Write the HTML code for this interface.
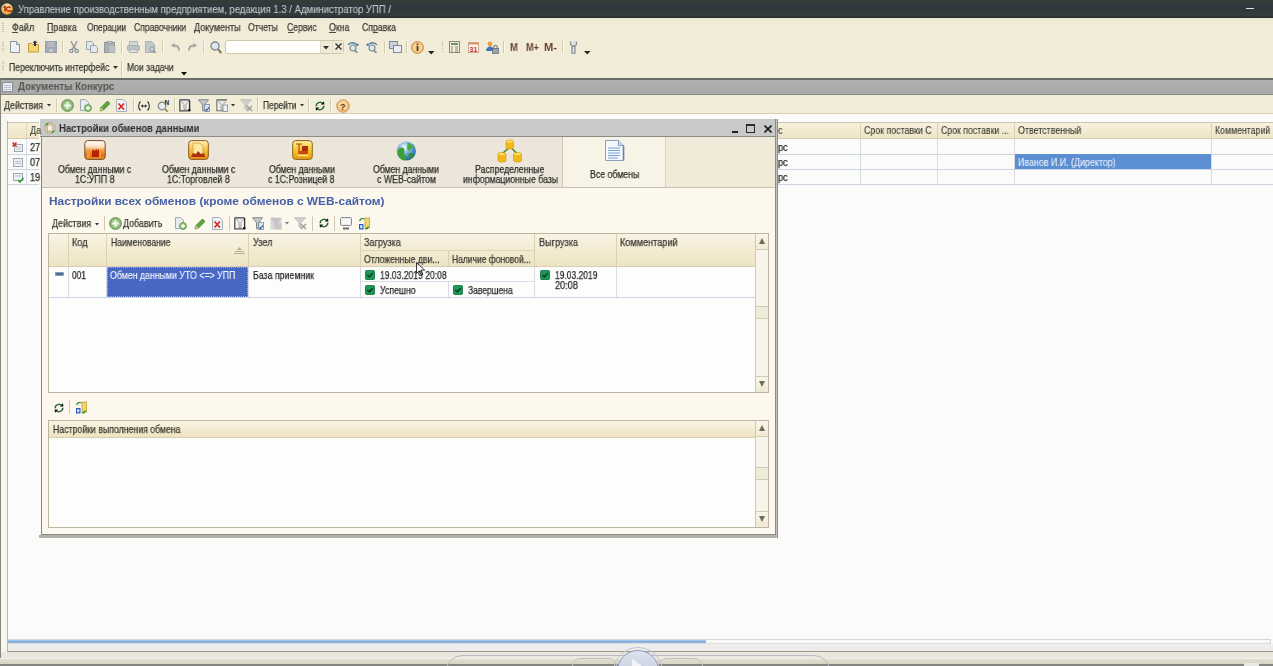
<!DOCTYPE html>
<html><head><meta charset="utf-8"><style>
html,body{margin:0;padding:0;}
body{width:1273px;height:666px;overflow:hidden;position:relative;background:#fbfbf9;font-family:"Liberation Sans", sans-serif;}
span{will-change:transform;}
</style></head><body>
<div style="position:absolute;left:0px;top:0px;width:1273px;height:18px;background:linear-gradient(#3b3a33 0px,#333b3d 2px,#2f373a 9px,#353d3c 15px,#262b2b 18px);"></div><svg style="position:absolute;left:1px;top:3px" width="12" height="12" viewBox="0 0 12 12"><defs><radialGradient id="lg" cx="0.45" cy="0.3" r="0.7"><stop offset="0" stop-color="#fbf4d0"/><stop offset="0.6" stop-color="#f4c060"/><stop offset="1" stop-color="#e89838"/></radialGradient></defs><circle cx="6" cy="6" r="5.8" fill="url(#lg)"/><path d="M2.5 4.5l1.5-1v5" stroke="#b02a10" stroke-width="1.5" fill="none"/><path d="M9.5 5a2.2 2 0 1 0-2 3h4" stroke="#c03010" stroke-width="1.4" fill="none"/></svg><div style="position:absolute;left:1246px;top:8px;width:8px;height:1px;background:#e0e2e3;"></div><div style="position:absolute;left:0px;top:18px;width:1273px;height:61px;background:linear-gradient(#e8e6d6 0px,#f1ebd7 3px,#f2edd8 61px);"></div><div style="position:absolute;left:2px;top:23px;width:2px;height:1px;background:#c8c2ae;"></div><div style="position:absolute;left:2px;top:25px;width:2px;height:1px;background:#c8c2ae;"></div><div style="position:absolute;left:2px;top:27px;width:2px;height:1px;background:#c8c2ae;"></div><div style="position:absolute;left:2px;top:29px;width:2px;height:1px;background:#c8c2ae;"></div><div style="position:absolute;left:2px;top:31px;width:2px;height:1px;background:#c8c2ae;"></div><div style="position:absolute;left:2px;top:42px;width:2px;height:1px;background:#c8c2ae;"></div><div style="position:absolute;left:2px;top:44px;width:2px;height:1px;background:#c8c2ae;"></div><div style="position:absolute;left:2px;top:46px;width:2px;height:1px;background:#c8c2ae;"></div><div style="position:absolute;left:2px;top:48px;width:2px;height:1px;background:#c8c2ae;"></div><div style="position:absolute;left:2px;top:50px;width:2px;height:1px;background:#c8c2ae;"></div><div style="position:absolute;left:2px;top:61px;width:2px;height:1px;background:#c8c2ae;"></div><div style="position:absolute;left:2px;top:63px;width:2px;height:1px;background:#c8c2ae;"></div><div style="position:absolute;left:2px;top:65px;width:2px;height:1px;background:#c8c2ae;"></div><div style="position:absolute;left:2px;top:67px;width:2px;height:1px;background:#c8c2ae;"></div><div style="position:absolute;left:2px;top:69px;width:2px;height:1px;background:#c8c2ae;"></div><div style="position:absolute;left:12px;top:32px;width:6px;height:1px;background:#4a4a40;"></div><div style="position:absolute;left:47px;top:32px;width:6px;height:1px;background:#4a4a40;"></div><div style="position:absolute;left:287.5px;top:32px;width:6px;height:1px;background:#4a4a40;"></div><div style="position:absolute;left:329px;top:32px;width:6.5px;height:1px;background:#4a4a40;"></div><div style="position:absolute;left:372.5px;top:32px;width:5px;height:1px;background:#4a4a40;"></div><svg style="position:absolute;left:10px;top:41px" width="10" height="12" viewBox="0 0 10 12"><path d="M0.5 0.5h6l3 3v8h-9z" fill="#eef3fa" stroke="#8d949a"/><path d="M6.5 0.5v3h3" fill="#d8dee6" stroke="#8d949a"/></svg><svg style="position:absolute;left:28px;top:40px" width="11" height="13" viewBox="0 0 11 13"><path d="M0.5 3.5h3l1 1h6v7.5h-10z" fill="#f3d676" stroke="#c59a3a"/><path d="M7 0.5l2.5 2.5h-1.5v3h-2v-3h-1.5z" fill="#333"/></svg><svg style="position:absolute;left:45px;top:41px" width="12" height="12" viewBox="0 0 12 12"><rect x="0.5" y="0.5" width="11" height="11" fill="#a0aab0" stroke="#98a2a8"/><rect x="2.5" y="1" width="7" height="5" fill="#b4bcc0"/><rect x="4" y="8" width="4" height="3" fill="#c4cacc"/></svg><div style="position:absolute;left:62px;top:40.5px;width:1px;height:12.5px;background:#d2cbb4;"></div><div style="position:absolute;left:63px;top:40.5px;width:1px;height:12.5px;background:#fbf8ee;"></div><svg style="position:absolute;left:69px;top:41px" width="10" height="12" viewBox="0 0 10 12"><path d="M2 0l3 6l3-6M5 6l-2.5 3M5 6l2.5 3" stroke="#8a949a" stroke-width="1.3" fill="none"/><circle cx="2.3" cy="10" r="1.7" fill="none" stroke="#8a949a" stroke-width="1.2"/><circle cx="7.7" cy="10" r="1.7" fill="none" stroke="#8a949a" stroke-width="1.2"/></svg><svg style="position:absolute;left:86px;top:41px" width="12" height="12" viewBox="0 0 12 12"><path d="M0.5 0.5h5l2 2v6h-7z" fill="#e4e8ec" stroke="#99a2a8"/><path d="M4.5 4.5h5l2 2v5h-7z" fill="#e4e8ec" stroke="#99a2a8"/></svg><svg style="position:absolute;left:104px;top:41px" width="12" height="12" viewBox="0 0 12 12"><rect x="0.5" y="1.5" width="10" height="10" fill="#a8b0b4" stroke="#8f989d"/><rect x="3" y="0.5" width="5" height="2" fill="#c0c6ca" stroke="#8f989d" stroke-width="0.8"/><rect x="5" y="5" width="6.5" height="6.5" fill="#b8c0c4"/></svg><div style="position:absolute;left:121px;top:40.5px;width:1px;height:12.5px;background:#d2cbb4;"></div><div style="position:absolute;left:122px;top:40.5px;width:1px;height:12.5px;background:#fbf8ee;"></div><svg style="position:absolute;left:127px;top:41px" width="13" height="12" viewBox="0 0 13 12"><rect x="2.5" y="0.5" width="8" height="4" fill="#d4d8d8" stroke="#b0b6b8"/><rect x="0.5" y="4.5" width="12" height="5" rx="1" fill="#bcc2c4" stroke="#aab0b2"/><rect x="2.5" y="8.5" width="8" height="3" fill="#dcdfe0" stroke="#b0b6b8"/></svg><svg style="position:absolute;left:145px;top:41px" width="12" height="12" viewBox="0 0 12 12"><path d="M0.5 0.5h6l3 3v8h-9z" fill="#c4cacc" stroke="#aab0b4"/><circle cx="7" cy="8" r="2.3" fill="#d0d6d8" stroke="#8e969a"/><path d="M8.5 9.5l2.5 2.5" stroke="#8e969a" stroke-width="1.4"/></svg><div style="position:absolute;left:162px;top:40.5px;width:1px;height:12.5px;background:#d2cbb4;"></div><div style="position:absolute;left:163px;top:40.5px;width:1px;height:12.5px;background:#fbf8ee;"></div><svg style="position:absolute;left:171px;top:43px" width="9" height="8" viewBox="0 0 9 8"><path d="M8 7.5c0-3-2-5-5-5" stroke="#a4a9a6" stroke-width="2" fill="none"/><path d="M0 2.5l3.5-2.5v5z" fill="#a4a9a6"/></svg><svg style="position:absolute;left:187.5px;top:43px" width="9" height="8" viewBox="0 0 9 8"><path d="M1 7.5c0-3 2-5 5-5" stroke="#a4a9a6" stroke-width="2" fill="none"/><path d="M9 2.5l-3.5-2.5v5z" fill="#a4a9a6"/></svg><div style="position:absolute;left:203px;top:40.5px;width:1px;height:12.5px;background:#d2cbb4;"></div><div style="position:absolute;left:204px;top:40.5px;width:1px;height:12.5px;background:#fbf8ee;"></div><svg style="position:absolute;left:209.5px;top:41px" width="12" height="13" viewBox="0 0 12 13"><circle cx="5" cy="5" r="4" fill="#dfe8f0" stroke="#7c8890" stroke-width="1.3"/><path d="M7.8 8l3.5 4" stroke="#8a7a5a" stroke-width="2"/></svg><div style="position:absolute;left:225px;top:39.5px;width:119px;height:14.5px;background:#fffefa;border:1px solid #cfc6ac;border-radius:3px;box-sizing:border-box;"></div><div style="position:absolute;left:320px;top:40.5px;width:12px;height:12.5px;background:#f0ead6;border-left:1px solid #e0d8c0;box-sizing:border-box;"></div><div style="position:absolute;left:332px;top:40.5px;width:11px;height:12.5px;background:#f0ead6;border-left:1px solid #e6dfc8;box-sizing:border-box;"></div><svg style="position:absolute;left:323px;top:45.5px" width="6" height="4" viewBox="0 0 6 4"><path d="M0 0h6l-3 3.5z" fill="#333"/></svg><svg style="position:absolute;left:334.5px;top:43px" width="7" height="7" viewBox="0 0 7 7"><path d="M0.5 0.5l6 6M6.5 0.5l-6 6" stroke="#333" stroke-width="1.4"/></svg><svg style="position:absolute;left:347px;top:41px" width="13" height="12" viewBox="0 0 13 12"><circle cx="6" cy="7" r="3" fill="#dfe8f0" stroke="#7c8890" stroke-width="1.2"/><path d="M8 9.5l2.5 2.5" stroke="#7c8890" stroke-width="1.6"/><path d="M1 4c2-3 7-3 9 0" stroke="#4a78a8" stroke-width="1.3" fill="none"/><path d="M12 4.5l-3 0.5l1.5-3z" fill="#4a78a8"/></svg><svg style="position:absolute;left:365px;top:41px" width="13" height="12" viewBox="0 0 13 12"><circle cx="7" cy="7" r="3" fill="#dfe8f0" stroke="#7c8890" stroke-width="1.2"/><path d="M9 9.5l2.5 2.5" stroke="#7c8890" stroke-width="1.6"/><path d="M3 4c2-3 7-3 9 0" stroke="#4a78a8" stroke-width="1.3" fill="none"/><path d="M1 4.5l3 0.5l-1.5-3z" fill="#4a78a8"/></svg><div style="position:absolute;left:383.5px;top:40.5px;width:1px;height:12.5px;background:#d2cbb4;"></div><div style="position:absolute;left:384.5px;top:40.5px;width:1px;height:12.5px;background:#fbf8ee;"></div><svg style="position:absolute;left:388.5px;top:41px" width="13" height="12" viewBox="0 0 13 12"><rect x="0.5" y="0.5" width="8" height="7" fill="#c8d4e0" stroke="#7c8c9c"/><rect x="4.5" y="4.5" width="8" height="7" fill="#e8eef4" stroke="#7c8c9c"/></svg><div style="position:absolute;left:405.5px;top:40.5px;width:1px;height:12.5px;background:#d2cbb4;"></div><div style="position:absolute;left:406.5px;top:40.5px;width:1px;height:12.5px;background:#fbf8ee;"></div><svg style="position:absolute;left:410.5px;top:40.5px" width="13" height="13" viewBox="0 0 13 13"><circle cx="6.5" cy="6.5" r="6" fill="#f0b872" stroke="#c8823a" stroke-width="0.8"/><circle cx="6.5" cy="6.5" r="4.5" fill="#f6d49a"/><rect x="5.6" y="5" width="1.8" height="5" fill="#5a3a10"/><rect x="5.6" y="2.6" width="1.8" height="1.6" fill="#5a3a10"/></svg><svg style="position:absolute;left:428px;top:50.5px" width="7" height="4" viewBox="0 0 7 4"><path d="M0 0h6.5l-3.25 3.5z" fill="#222"/></svg><div style="position:absolute;left:442px;top:41.0px;width:1px;height:1.2px;background:#c4bea8;"></div><div style="position:absolute;left:442px;top:43.4px;width:1px;height:1.2px;background:#c4bea8;"></div><div style="position:absolute;left:442px;top:45.8px;width:1px;height:1.2px;background:#c4bea8;"></div><div style="position:absolute;left:442px;top:48.2px;width:1px;height:1.2px;background:#c4bea8;"></div><div style="position:absolute;left:442px;top:50.6px;width:1px;height:1.2px;background:#c4bea8;"></div><svg style="position:absolute;left:449px;top:41px" width="11" height="12" viewBox="0 0 11 12"><rect x="0.5" y="0.5" width="10" height="11" fill="#f4f0e0" stroke="#8a8670"/><rect x="2" y="2" width="7" height="2" fill="#6a9a5a"/><path d="M2 6h2M6 6h3M2 8h2M6 8h3M2 10h2M6 10h3" stroke="#8a8670" stroke-width="1"/></svg><svg style="position:absolute;left:467.5px;top:41px" width="11" height="12" viewBox="0 0 11 12"><rect x="0.5" y="1.5" width="10" height="10" fill="#fbf6ec" stroke="#c8a890"/><rect x="0.5" y="1.5" width="10" height="2" fill="#e09070"/><text x="1.5" y="10.5" font-size="7" font-weight="700" fill="#d02a1a" font-family="Liberation Sans">31</text></svg><svg style="position:absolute;left:485.5px;top:41px" width="13" height="13" viewBox="0 0 13 13"><circle cx="4" cy="3" r="2.4" fill="#e8a040"/><path d="M0 10c0-3 2-4.5 4-4.5s4 1.5 4 4.5z" fill="#3a78c0"/><rect x="6.5" y="7.5" width="6" height="5" fill="#9aa4ac" stroke="#5a646c" stroke-width="0.7"/><path d="M7.8 7.5v-1.5a1.7 1.7 0 0 1 3.4 0v1.5" stroke="#5a646c" fill="none"/></svg><div style="position:absolute;left:502.5px;top:40.5px;width:1px;height:12.5px;background:#d2cbb4;"></div><div style="position:absolute;left:503.5px;top:40.5px;width:1px;height:12.5px;background:#fbf8ee;"></div><div style="position:absolute;left:561.5px;top:40.5px;width:1px;height:12.5px;background:#d2cbb4;"></div><div style="position:absolute;left:562.5px;top:40.5px;width:1px;height:12.5px;background:#fbf8ee;"></div><svg style="position:absolute;left:568.5px;top:41px" width="9" height="13" viewBox="0 0 9 13"><path d="M1.5 0.5v3l3 2l3-2v-3M3 5v6.5a1.5 1.5 0 0 0 3 0v-6.5" stroke="#8a9096" stroke-width="1.3" fill="#dde2e6"/></svg><svg style="position:absolute;left:584px;top:50.5px" width="7" height="4" viewBox="0 0 7 4"><path d="M0 0h6.5l-3.25 3.5z" fill="#222"/></svg><svg style="position:absolute;left:113px;top:66px" width="5" height="3" viewBox="0 0 5 3"><path d="M0 0h5l-2.5 3z" fill="#333"/></svg><div style="position:absolute;left:121px;top:61px;width:1px;height:16px;background:#d2cbb4;"></div><div style="position:absolute;left:122px;top:61px;width:1px;height:16px;background:#fbf8ee;"></div><svg style="position:absolute;left:180.5px;top:71.5px" width="6" height="4" viewBox="0 0 6 4"><path d="M0 0h6l-3 3.5z" fill="#111"/></svg><div style="position:absolute;left:0px;top:78px;width:1273px;height:2px;background:#6a6a66;"></div><div style="position:absolute;left:0px;top:80px;width:1273px;height:15px;background:linear-gradient(#b0b0ae,#a8a8a6);"></div><div style="position:absolute;left:0px;top:94px;width:1273px;height:1px;background:#8c8c88;"></div><svg style="position:absolute;left:2px;top:81.5px" width="11" height="10" viewBox="0 0 11 10"><rect x="0.5" y="0.5" width="10" height="9" fill="#e8ecf0" stroke="#8a9098"/><path d="M2 3.5h7M2 5.5h7M2 7.5h7" stroke="#b8c0c8"/></svg><div style="position:absolute;left:0px;top:95px;width:1273px;height:19px;background:#f2edd8;"></div><div style="position:absolute;left:0px;top:113px;width:1273px;height:1px;background:#d6ceb6;"></div><div style="position:absolute;left:0px;top:114px;width:1273px;height:1px;background:#fffdf6;"></div><svg style="position:absolute;left:47px;top:103.5px" width="4" height="3" viewBox="0 0 4 3"><path d="M0 0h4l-2 2.5z" fill="#333"/></svg><div style="position:absolute;left:55.5px;top:98px;width:1px;height:14px;background:#d2cbb4;"></div><div style="position:absolute;left:56.5px;top:98px;width:1px;height:14px;background:#fbf8ee;"></div><svg style="position:absolute;left:60.5px;top:99px" width="13" height="13" viewBox="0 0 13 13"><circle cx="6.5" cy="6.5" r="6" fill="#88b070" stroke="#6e9660" stroke-width="0.9"/><circle cx="6.5" cy="6.5" r="4.4" fill="#a2c88c"/><path d="M6.5 3.2v6.6M3.2 6.5h6.6" stroke="#f4faf0" stroke-width="2"/></svg><svg style="position:absolute;left:80px;top:99px" width="12" height="13" viewBox="0 0 12 13"><path d="M0.5 0.5h5l3 3v8h-8z" fill="#e8ecf0" stroke="#a0a8b0"/><circle cx="8" cy="9" r="3.5" fill="#8cc070" stroke="#5e9a50" stroke-width="0.8"/><path d="M8 7v4M6 9h4" stroke="#fff" stroke-width="1.3"/></svg><svg style="position:absolute;left:99px;top:100px" width="11" height="12" viewBox="0 0 11 12"><path d="M1 11l1-3.5l6.5-6.5l2.5 2.5l-6.5 6.5z" fill="#5aa83a" stroke="#3a7a28" stroke-width="0.8"/><path d="M1 11l1-3.5l2.5 2.5z" fill="#d8c890"/></svg><svg style="position:absolute;left:116px;top:99px" width="11" height="13" viewBox="0 0 11 13"><path d="M0.5 0.5h7l3 3v9h-10z" fill="#eef2f6" stroke="#a8b0b8"/><path d="M2.5 4.5l5.5 6M8 4.5l-5.5 6" stroke="#d8201a" stroke-width="1.6"/></svg><div style="position:absolute;left:133px;top:98px;width:1px;height:14px;background:#d2cbb4;"></div><div style="position:absolute;left:134px;top:98px;width:1px;height:14px;background:#fbf8ee;"></div><svg style="position:absolute;left:138px;top:101px" width="12" height="10" viewBox="0 0 12 10"><path d="M2.5 0.5c-2.5 2.5-2.5 6.5 0 9M9.5 0.5c2.5 2.5 2.5 6.5 0 9" stroke="#333" stroke-width="1.1" fill="none"/><path d="M3.5 5h5" stroke="#333" stroke-width="1"/><path d="M3 5l2-1.8v3.6zM9 5l-2-1.8v3.6z" fill="#333"/></svg><svg style="position:absolute;left:157px;top:98.5px" width="13" height="13" viewBox="0 0 13 13"><circle cx="5" cy="7" r="3.8" fill="#e4eaf0" stroke="#7c8890" stroke-width="1.2"/><path d="M7.8 9.8l3 3" stroke="#a0885a" stroke-width="1.8"/><text x="7.5" y="6" font-size="6.5" font-weight="700" fill="#222" font-family="Liberation Sans">N</text></svg><div style="position:absolute;left:173.5px;top:98px;width:1px;height:14px;background:#d2cbb4;"></div><div style="position:absolute;left:174.5px;top:98px;width:1px;height:14px;background:#fbf8ee;"></div><svg style="position:absolute;left:179px;top:98.5px" width="12" height="13" viewBox="0 0 12 13"><path d="M0.8 1v10.8h8.5" stroke="#4a5054" stroke-width="1.3" fill="none"/><path d="M0.5 0.7h10" stroke="#5a6064" stroke-width="1.3"/><path d="M1.5 1.5l3.5 4v5h2v-5l3.5-4z" fill="#e8eaea" stroke="#8a9094" stroke-width="0.8"/><path d="M10.6 1v10" stroke="#2a2e30" stroke-width="1.3"/><circle cx="10.3" cy="11.3" r="1.3" fill="#111"/></svg><svg style="position:absolute;left:197.5px;top:98.5px" width="12" height="13" viewBox="0 0 12 13"><path d="M0.5 0.7h10l-4 5v6h-2v-6z" fill="#c4c8ca" stroke="#7a8084" stroke-width="0.9"/><rect x="6.5" y="5.5" width="5" height="7" fill="#d8e6f4" stroke="#7a8a98" stroke-width="0.8"/><path d="M7.5 10.5l1 1l2.5-3" stroke="#1a4a8a" stroke-width="1.1" fill="none"/></svg><svg style="position:absolute;left:215.5px;top:98.5px" width="12" height="13" viewBox="0 0 12 13"><path d="M0.8 1v10.8h9" stroke="#6a7074" stroke-width="1.1" fill="none"/><path d="M0.5 0.7h10.5" stroke="#6a7074" stroke-width="1.1"/><path d="M1.5 1.5l3.5 4v5h2v-5l3.5-4z" fill="#e4e8ea" stroke="#8a9094" stroke-width="0.8"/><rect x="7" y="6" width="4.5" height="6.5" fill="#eef2f6" stroke="#7a8a98" stroke-width="0.8"/></svg><svg style="position:absolute;left:230.5px;top:103.5px" width="4" height="3" viewBox="0 0 4 3"><path d="M0 0h4l-2 2.5z" fill="#333"/></svg><svg style="position:absolute;left:240px;top:98.5px" width="13" height="13" viewBox="0 0 13 13"><path d="M0.5 0.7h11l-4.5 5v5l-2 -1v-4z" fill="#d0d0ce" stroke="#b4b4b2" stroke-width="0.8"/><path d="M7 7l5 5M12 7l-5 5" stroke="#a0a09e" stroke-width="1.5"/></svg><div style="position:absolute;left:257px;top:98px;width:1px;height:14px;background:#d2cbb4;"></div><div style="position:absolute;left:258px;top:98px;width:1px;height:14px;background:#fbf8ee;"></div><svg style="position:absolute;left:300px;top:103.5px" width="4" height="3" viewBox="0 0 4 3"><path d="M0 0h4l-2 2.5z" fill="#333"/></svg><div style="position:absolute;left:308px;top:98px;width:1px;height:14px;background:#d2cbb4;"></div><div style="position:absolute;left:309px;top:98px;width:1px;height:14px;background:#fbf8ee;"></div><svg style="position:absolute;left:314px;top:100.5px" width="12" height="10" viewBox="0 0 12 10"><path d="M2.2 5.2a3.8 3.8 0 0 1 6.6-2.6M9.8 4.8a3.8 3.8 0 0 1-6.6 2.6" stroke="#2a6a34" stroke-width="1.5" fill="none"/><path d="M6.8 3.4l3.6 0.2l-0.4-3.4zM5.2 6.6l-3.6-0.2l0.4 3.4z" fill="#111"/></svg><div style="position:absolute;left:330px;top:98px;width:1px;height:14px;background:#d2cbb4;"></div><div style="position:absolute;left:331px;top:98px;width:1px;height:14px;background:#fbf8ee;"></div><svg style="position:absolute;left:335.5px;top:98.5px" width="14" height="14" viewBox="0 0 14 14"><circle cx="7" cy="7" r="6.3" fill="#eeb472" stroke="#c8904a" stroke-width="0.8"/><circle cx="7" cy="6.5" r="4.8" fill="#f6d49c"/><text x="4" y="10.5" font-size="9" font-weight="700" fill="#6a3a10" font-family="Liberation Sans">?</text></svg><div style="position:absolute;left:0px;top:115px;width:1273px;height:537px;background:#fbfbf9;"></div><div style="position:absolute;left:0px;top:79px;width:1px;height:579px;background:#86867e;"></div><div style="position:absolute;left:1px;top:115px;width:6px;height:537px;background:#f7f6ee;"></div><div style="position:absolute;left:7px;top:121px;width:1px;height:530px;background:#b8b6ac;"></div><div style="position:absolute;left:7.5px;top:121.5px;width:1266px;height:17px;background:linear-gradient(#f6f1de,#efe5c6);border-top:1px solid #cfc7ad;border-bottom:1px solid #d8ceb0;box-sizing:border-box;"></div><div style="position:absolute;left:26px;top:122px;width:1px;height:16px;background:#dcd3b4;"></div><div style="position:absolute;left:26px;top:138.5px;width:1px;height:46px;background:#d8dde4;"></div><div style="position:absolute;left:860px;top:122px;width:1px;height:16px;background:#dcd3b4;"></div><div style="position:absolute;left:860px;top:138.5px;width:1px;height:46px;background:#d8dde4;"></div><div style="position:absolute;left:937px;top:122px;width:1px;height:16px;background:#dcd3b4;"></div><div style="position:absolute;left:937px;top:138.5px;width:1px;height:46px;background:#d8dde4;"></div><div style="position:absolute;left:1014px;top:122px;width:1px;height:16px;background:#dcd3b4;"></div><div style="position:absolute;left:1014px;top:138.5px;width:1px;height:46px;background:#d8dde4;"></div><div style="position:absolute;left:1211px;top:122px;width:1px;height:16px;background:#dcd3b4;"></div><div style="position:absolute;left:1211px;top:138.5px;width:1px;height:46px;background:#d8dde4;"></div><div style="position:absolute;left:7.5px;top:154px;width:1266px;height:1px;background:#ccd6e2;"></div><div style="position:absolute;left:7.5px;top:169px;width:1266px;height:1px;background:#ccd6e2;"></div><div style="position:absolute;left:7.5px;top:184px;width:1266px;height:1px;background:#ccd6e2;"></div><svg style="position:absolute;left:12px;top:142px" width="12" height="11" viewBox="0 0 12 11"><rect x="2.5" y="2.5" width="8" height="7" fill="#eef0f4" stroke="#a0a8b4"/><path d="M4 5h5M4 7h5" stroke="#c0c8d0"/><path d="M0.5 0.5l4 4M4.5 0.5l-4 4" stroke="#d82a1a" stroke-width="1.5"/></svg><svg style="position:absolute;left:12px;top:157px" width="12" height="11" viewBox="0 0 12 11"><rect x="1.5" y="1.5" width="9" height="8" fill="#eef0f4" stroke="#a0a8b4"/><path d="M3 4.5h6M3 6.5h6" stroke="#b8c0c8"/></svg><svg style="position:absolute;left:12px;top:172px" width="12" height="11" viewBox="0 0 12 11"><rect x="1.5" y="1.5" width="9" height="7" fill="#eef0f4" stroke="#a0a8b4"/><path d="M3 4h6" stroke="#b8c0c8"/><path d="M6 8l2 2l3.5-4" stroke="#2a9a3a" stroke-width="1.6" fill="none"/></svg><div style="position:absolute;left:1015px;top:154px;width:196px;height:15px;background:#5b8fd2;"></div><div style="position:absolute;left:8px;top:639px;width:1263px;height:1px;background:#d6d6d4;"></div><div style="position:absolute;left:8px;top:640px;width:1263px;height:3px;background:#f8f8f8;"></div><div style="position:absolute;left:8px;top:640px;width:698px;height:3px;background:linear-gradient(#b4d4f2,#78a2da 60%,#a4c4ea);"></div><div style="position:absolute;left:8px;top:643px;width:1263px;height:1px;background:#dcdcda;"></div><div style="position:absolute;left:1270px;top:639px;width:1px;height:5px;background:#d0d0ce;"></div><div style="position:absolute;left:7.5px;top:644px;width:1266px;height:7px;background:linear-gradient(#efefee,#ebebea);"></div><div style="position:absolute;left:7px;top:651px;width:1266px;height:1px;background:#9a988e;"></div><div style="position:absolute;left:0px;top:652px;width:1273px;height:6px;background:#e9e7de;"></div><div style="position:absolute;left:0px;top:658px;width:1273px;height:1px;background:#f2f0e8;"></div><div style="position:absolute;left:0px;top:659px;width:1273px;height:5px;background:linear-gradient(#e2dfd2,#d8d4c2);"></div><div style="position:absolute;left:0px;top:652px;width:1px;height:6px;background:#86867e;"></div><div style="position:absolute;left:0px;top:664px;width:1273px;height:2px;background:#858580;"></div><div style="position:absolute;left:1244px;top:663px;width:15px;height:3px;background:#e8e8e6;"></div><div style="position:absolute;left:446px;top:655px;width:384px;height:40px;border:1px solid #bdb8c8;border-radius:16px;box-sizing:border-box;"></div><div style="position:absolute;left:572px;top:658px;width:45px;height:30px;border:1px solid #c4c0c8;border-radius:8px;box-sizing:border-box;"></div><div style="position:absolute;left:658px;top:658px;width:45px;height:30px;border:1px solid #c4c0c8;border-radius:8px;box-sizing:border-box;"></div><div style="position:absolute;left:613px;top:647px;width:50px;height:50px;border:1px solid #c8c4cc;border-radius:50%;box-sizing:border-box;"></div><div style="position:absolute;left:617px;top:650px;width:42px;height:42px;border:1px solid #8e9cc4;border-radius:50%;box-sizing:border-box;background:linear-gradient(#dde2ec,#b8c4d8);"></div><svg style="position:absolute;left:632px;top:659px" width="12" height="8" viewBox="0 0 12 8"><path d="M0 0l10 7h-10z" fill="#f4f4f8"/></svg><div style="position:absolute;left:40px;top:119px;width:737px;height:418px;background:#fcf8ee;"></div><div style="position:absolute;left:39px;top:119px;width:1.5px;height:419px;background:#fbfbf8;"></div><div style="position:absolute;left:40.5px;top:136px;width:1.5px;height:399px;background:#83837c;"></div><div style="position:absolute;left:775px;top:119px;width:1px;height:416px;background:#8c8c86;"></div><div style="position:absolute;left:776px;top:119px;width:1px;height:419px;background:#c2c2c0;"></div><div style="position:absolute;left:777px;top:119px;width:1px;height:419px;background:#8e8e8c;"></div><div style="position:absolute;left:40.5px;top:534px;width:735.5px;height:1px;background:#8c8c86;"></div><div style="position:absolute;left:39px;top:535px;width:737px;height:2.5px;background:#b0b0aa;"></div><div style="position:absolute;left:40px;top:119px;width:735px;height:17px;background:#c8c9c9;"></div><div style="position:absolute;left:40px;top:135.5px;width:735px;height:1px;background:#8e8c84;"></div><svg style="position:absolute;left:43.5px;top:122px" width="12" height="12" viewBox="0 0 12 12"><circle cx="6" cy="6" r="5.5" fill="#d8c8a8" stroke="#b0a080" stroke-width="0.6"/><rect x="3.5" y="3" width="5" height="6" fill="#f6f0e0" stroke="#a89878" stroke-width="0.6"/><path d="M0.5 4a6 6 0 0 1 4-3.5l-0.5 2z" fill="#2aa02a"/><path d="M11.5 8a6 6 0 0 1-4 3.5l0.5-2z" fill="#2aa02a"/></svg><div style="position:absolute;left:731.8px;top:130.5px;width:6.5px;height:2.5px;background:#222;"></div><div style="position:absolute;left:746px;top:124px;width:9px;height:9px;border:1px solid #2a2a2a;border-top-width:2px;box-sizing:border-box;"></div><svg style="position:absolute;left:763.5px;top:124.5px" width="8" height="8" viewBox="0 0 8 8"><path d="M0.5 0.5l7 7M7.5 0.5l-7 7" stroke="#1a1a1a" stroke-width="1.6"/></svg><div style="position:absolute;left:42px;top:137px;width:733px;height:50px;background:#ebe6d9;"></div><div style="position:absolute;left:42px;top:186.5px;width:733px;height:1px;background:#c8c2b0;"></div><div style="position:absolute;left:562px;top:137px;width:103.5px;height:49.5px;background:#f7f3e7;"></div><div style="position:absolute;left:562px;top:137px;width:1px;height:50px;background:#cdc7b4;"></div><div style="position:absolute;left:665px;top:137px;width:1px;height:50px;background:#d8d2c0;"></div><div style="position:absolute;left:666px;top:137px;width:109px;height:49.5px;background:#f0ebd8;"></div><svg style="position:absolute;left:83.5px;top:139.5px" width="22" height="20" viewBox="0 0 22 20"><defs><linearGradient id="g1" x1="0" y1="0" x2="0" y2="1"><stop offset="0" stop-color="#fffdf8"/><stop offset="0.3" stop-color="#fbe6d0"/><stop offset="0.5" stop-color="#f4a050"/><stop offset="0.8" stop-color="#e07018"/><stop offset="1" stop-color="#e8a030"/></linearGradient></defs><rect x="0.8" y="0.6" width="20.4" height="18.8" rx="3" fill="url(#g1)" stroke="#7a4a28" stroke-width="1"/><path d="M8 17v-6l2-2v2l3-2v2l2-2v8z" fill="#b82000"/><path d="M3 17v-5l2-2l1 2v5zM15 17v-6l2-1v7z" fill="#f0a020"/></svg><svg style="position:absolute;left:187.5px;top:139.5px" width="21" height="20" viewBox="0 0 21 20"><defs><linearGradient id="g2" x1="0" y1="0" x2="0" y2="1"><stop offset="0" stop-color="#fff4c0"/><stop offset="0.45" stop-color="#f8c848"/><stop offset="1" stop-color="#e88818"/></linearGradient></defs><rect x="0.7" y="0.6" width="19.6" height="18.8" rx="3" fill="url(#g2)" stroke="#8a5a20" stroke-width="1"/><path d="M5 3h7l3 3v10h-10z" fill="#fde8a0" stroke="#d89030" stroke-width="0.7"/><path d="M3 17l2-4l3 1l2-3l3 3l3-1l1 4z" fill="#a83010"/></svg><svg style="position:absolute;left:291.5px;top:140px" width="21" height="20" viewBox="0 0 21 20"><defs><linearGradient id="g3" x1="0" y1="0" x2="0" y2="1"><stop offset="0" stop-color="#fff0a0"/><stop offset="0.5" stop-color="#f8c828"/><stop offset="1" stop-color="#e89810"/></linearGradient></defs><rect x="0.7" y="0.6" width="19.6" height="18.8" rx="3" fill="url(#g3)" stroke="#8a6418" stroke-width="1"/><path d="M4 4h6M7 4v10" stroke="#c04010" stroke-width="1.2"/><rect x="10" y="6" width="6" height="5" fill="#a83010"/><rect x="7" y="11" width="9" height="3" fill="#c84818"/><path d="M6 15.5h10" stroke="#f8e8b0" stroke-width="1"/></svg><svg style="position:absolute;left:396px;top:141px" width="21" height="20" viewBox="0 0 21 20"><defs><radialGradient id="gg" cx="0.4" cy="0.3" r="0.8"><stop offset="0" stop-color="#f0f8ff"/><stop offset="0.3" stop-color="#9ac4e8"/><stop offset="0.7" stop-color="#3a80c0"/><stop offset="1" stop-color="#1a5090"/></radialGradient></defs><circle cx="10.3" cy="10" r="9.6" fill="url(#gg)"/><path d="M2 9c2-3 5-3 6-1s-1 4 1 6s1 4-1 5.5c-4-1-6.5-4-6-10.5z" fill="#3aa030"/><path d="M11 2c3 0 6 2 7 5c-2 1-3 0-4 2s-3 0-3-2s1-3 0-5z" fill="#48b038"/><path d="M12 13c2-1 4-1 6 0c-1 3-3 5-6 6c1-2 2-3 0-6z" fill="#30902a"/></svg><svg style="position:absolute;left:497px;top:138.5px" width="26" height="24" viewBox="0 0 26 24"><path d="M12.5 8L5 15M13.5 8L20.5 15" stroke="#4a8a30" stroke-width="1.6"/><g fill="#f2b818" stroke="#d09010" stroke-width="0.6"><path d="M9 2.5a3.8 1.5 0 0 1 7.6 0v6a3.8 1.5 0 0 1-7.6 0z"/><path d="M1 15a4 1.5 0 0 1 8 0v6.5a4 1.5 0 0 1-8 0z"/><path d="M16.5 15a4 1.5 0 0 1 8 0v6.5a4 1.5 0 0 1-8 0z"/></g><g fill="#fde070"><ellipse cx="12.8" cy="2.5" rx="3.2" ry="1.1"/><ellipse cx="5" cy="15" rx="3.4" ry="1.1"/><ellipse cx="20.5" cy="15" rx="3.4" ry="1.1"/></g></svg><svg style="position:absolute;left:603.5px;top:139px" width="22" height="23" viewBox="0 0 22 23"><path d="M1.5 1.5h13l5 5v15h-18z" fill="#f4f8fc" stroke="#8aa0c0" stroke-width="1"/><path d="M14.5 1.5v5h5" fill="#c8d8ec" stroke="#8aa0c0" stroke-width="1"/><path d="M4 9h12M4 11.5h12M4 14h12M4 16.5h12M4 19h10" stroke="#7aa0d8" stroke-width="1"/><path d="M19.5 6.5v15" stroke="#6a80a8" stroke-width="1.6"/></svg><svg style="position:absolute;left:95px;top:222.5px" width="4" height="3" viewBox="0 0 4 3"><path d="M0 0h4l-2 2.5z" fill="#333"/></svg><div style="position:absolute;left:103.5px;top:216px;width:1px;height:15px;background:#d2cbb4;"></div><div style="position:absolute;left:104.5px;top:216px;width:1px;height:15px;background:#fbf8ee;"></div><svg style="position:absolute;left:108.5px;top:216.5px" width="13" height="13" viewBox="0 0 13 13"><circle cx="6.5" cy="6.5" r="6" fill="#88b070" stroke="#6e9660" stroke-width="0.9"/><circle cx="6.5" cy="6.5" r="4.4" fill="#a2c88c"/><path d="M6.5 3.2v6.6M3.2 6.5h6.6" stroke="#f4faf0" stroke-width="2"/></svg><svg style="position:absolute;left:175px;top:217px" width="12" height="13" viewBox="0 0 12 13"><path d="M0.5 0.5h5l3 3v8h-8z" fill="#e8ecf0" stroke="#a0a8b0"/><circle cx="8" cy="9" r="3.5" fill="#8cc070" stroke="#5e9a50" stroke-width="0.8"/><path d="M8 7v4M6 9h4" stroke="#fff" stroke-width="1.3"/></svg><svg style="position:absolute;left:194px;top:217.5px" width="11" height="12" viewBox="0 0 11 12"><path d="M1 11l1-3.5l6.5-6.5l2.5 2.5l-6.5 6.5z" fill="#5aa83a" stroke="#3a7a28" stroke-width="0.8"/><path d="M1 11l1-3.5l2.5 2.5z" fill="#d8c890"/></svg><svg style="position:absolute;left:212px;top:217px" width="11" height="13" viewBox="0 0 11 13"><path d="M0.5 0.5h7l3 3v9h-10z" fill="#eef2f6" stroke="#a8b0b8"/><path d="M2.5 4.5l5.5 6M8 4.5l-5.5 6" stroke="#d8201a" stroke-width="1.6"/></svg><div style="position:absolute;left:228.5px;top:216px;width:1px;height:15px;background:#d2cbb4;"></div><div style="position:absolute;left:229.5px;top:216px;width:1px;height:15px;background:#fbf8ee;"></div><svg style="position:absolute;left:233.5px;top:216.5px" width="12" height="13" viewBox="0 0 12 13"><path d="M0.8 1v10.8h8.5" stroke="#4a5054" stroke-width="1.3" fill="none"/><path d="M0.5 0.7h10" stroke="#5a6064" stroke-width="1.3"/><path d="M1.5 1.5l3.5 4v5h2v-5l3.5-4z" fill="#e8eaea" stroke="#8a9094" stroke-width="0.8"/><path d="M10.6 1v10" stroke="#2a2e30" stroke-width="1.3"/><circle cx="10.3" cy="11.3" r="1.3" fill="#111"/></svg><svg style="position:absolute;left:252px;top:216.5px" width="12" height="13" viewBox="0 0 12 13"><path d="M0.5 0.7h10l-4 5v6h-2v-6z" fill="#c4c8ca" stroke="#7a8084" stroke-width="0.9"/><rect x="6.5" y="5.5" width="5" height="7" fill="#d8e6f4" stroke="#7a8a98" stroke-width="0.8"/><path d="M7.5 10.5l1 1l2.5-3" stroke="#1a4a8a" stroke-width="1.1" fill="none"/></svg><svg style="position:absolute;left:270px;top:216.5px" width="12" height="13" viewBox="0 0 12 13"><rect x="0.5" y="0.5" width="11" height="12" fill="#d8d8d8"/><path d="M0.5 1h11l-4 5v6h-3v-6z" fill="#c4c4c4"/><rect x="6.5" y="6" width="5" height="6.5" fill="#cacaca"/></svg><svg style="position:absolute;left:284.8px;top:222px" width="4" height="3" viewBox="0 0 4 3"><path d="M0 0h4l-2 2.5z" fill="#777"/></svg><svg style="position:absolute;left:294px;top:216.5px" width="13" height="13" viewBox="0 0 13 13"><path d="M0.5 0.7h11l-4.5 5v5l-2 -1v-4z" fill="#d0d0ce" stroke="#b4b4b2" stroke-width="0.8"/><path d="M7 7l5 5M12 7l-5 5" stroke="#a0a09e" stroke-width="1.5"/></svg><div style="position:absolute;left:311.5px;top:216px;width:1px;height:15px;background:#d2cbb4;"></div><div style="position:absolute;left:312.5px;top:216px;width:1px;height:15px;background:#fbf8ee;"></div><svg style="position:absolute;left:317.5px;top:218px" width="12" height="10" viewBox="0 0 12 10"><path d="M2.2 5.2a3.8 3.8 0 0 1 6.6-2.6M9.8 4.8a3.8 3.8 0 0 1-6.6 2.6" stroke="#2a6a34" stroke-width="1.5" fill="none"/><path d="M6.8 3.4l3.6 0.2l-0.4-3.4zM5.2 6.6l-3.6-0.2l0.4 3.4z" fill="#111"/></svg><div style="position:absolute;left:333.5px;top:216px;width:1px;height:15px;background:#d2cbb4;"></div><div style="position:absolute;left:334.5px;top:216px;width:1px;height:15px;background:#fbf8ee;"></div><svg style="position:absolute;left:339.5px;top:216.5px" width="12" height="13" viewBox="0 0 12 13"><rect x="0.5" y="0.5" width="11" height="8" rx="1" fill="#e8eaec" stroke="#8a9094"/><rect x="2" y="2" width="8" height="5" fill="#f8f8f8"/><path d="M3 11.5h6" stroke="#6a7074" stroke-width="2"/></svg><svg style="position:absolute;left:358px;top:216.5px" width="13" height="13" viewBox="0 0 13 13"><rect x="7" y="1" width="4.5" height="10" fill="#f2d870" stroke="#c8a030" stroke-width="0.8"/><rect x="1" y="7" width="4.5" height="5.5" fill="#2a5ad0"/><rect x="2.2" y="8.2" width="2.1" height="3" fill="#e8f0ff"/><path d="M1.5 4c1-2.5 3-3 5-2" stroke="#2a8a2a" stroke-width="1.2" fill="none"/><path d="M7 12c1.5 0 3-1 3.5-2.5" stroke="#2a8a2a" stroke-width="1.2" fill="none"/></svg><div style="position:absolute;left:48px;top:233px;width:721px;height:160px;background:#fdfdfb;border:1px solid #bcb6a2;box-sizing:border-box;"></div><div style="position:absolute;left:49px;top:234px;width:706px;height:32px;background:linear-gradient(#f8f3e4,#f2e9cf 60%,#eee3c3);"></div><div style="position:absolute;left:49px;top:266px;width:706px;height:1px;background:#d8ceae;"></div><div style="position:absolute;left:68px;top:234px;width:1px;height:32px;background:#dcd2b2;"></div><div style="position:absolute;left:106px;top:234px;width:1px;height:32px;background:#dcd2b2;"></div><div style="position:absolute;left:248px;top:234px;width:1px;height:32px;background:#dcd2b2;"></div><div style="position:absolute;left:360px;top:234px;width:1px;height:32px;background:#dcd2b2;"></div><div style="position:absolute;left:534px;top:234px;width:1px;height:32px;background:#dcd2b2;"></div><div style="position:absolute;left:616px;top:234px;width:1px;height:32px;background:#dcd2b2;"></div><div style="position:absolute;left:360px;top:250px;width:174px;height:1px;background:#e0d6b8;"></div><div style="position:absolute;left:448px;top:251px;width:1px;height:15px;background:#dcd2b2;"></div><div style="position:absolute;left:68px;top:267px;width:1px;height:30px;background:#d6dde8;"></div><div style="position:absolute;left:106px;top:267px;width:1px;height:30px;background:#d6dde8;"></div><div style="position:absolute;left:248px;top:267px;width:1px;height:30px;background:#d6dde8;"></div><div style="position:absolute;left:360px;top:267px;width:1px;height:30px;background:#d6dde8;"></div><div style="position:absolute;left:534px;top:267px;width:1px;height:30px;background:#d6dde8;"></div><div style="position:absolute;left:616px;top:267px;width:1px;height:30px;background:#d6dde8;"></div><div style="position:absolute;left:448px;top:282px;width:1px;height:15px;background:#d6dde8;"></div><div style="position:absolute;left:360px;top:281px;width:174px;height:1px;background:#d6dde8;"></div><div style="position:absolute;left:49px;top:297px;width:706px;height:1px;background:#c8d3e4;"></div><svg style="position:absolute;left:233.5px;top:246.5px" width="11" height="7" viewBox="0 0 11 7"><path d="M5.5 0l2.5 3h-5z" fill="#b8b090"/><path d="M1 4.5h9M0 6.5h11" stroke="#b8b090" stroke-width="1"/></svg><svg style="position:absolute;left:54.5px;top:271.5px" width="9" height="4" viewBox="0 0 9 4"><rect x="0.5" y="0.5" width="8" height="3" fill="#4e6c96" stroke="#6a84a8" stroke-width="0.5"/></svg><div style="position:absolute;left:107px;top:267px;width:141px;height:30px;background:#4868c4;outline:1px dotted #a0b0e0;outline-offset:-1px;"></div><svg style="position:absolute;left:365.2px;top:269.8px" width="10" height="10" viewBox="0 0 10 10"><rect x="0.5" y="0.5" width="9" height="9" rx="1" fill="#1a9a58" stroke="#0a6a38" stroke-width="0.8"/><path d="M2.3 5l2 2l3.5-4" stroke="#0a3a1a" stroke-width="1.4" fill="none"/></svg><svg style="position:absolute;left:365.2px;top:284.8px" width="10" height="10" viewBox="0 0 10 10"><rect x="0.5" y="0.5" width="9" height="9" rx="1" fill="#1a9a58" stroke="#0a6a38" stroke-width="0.8"/><path d="M2.3 5l2 2l3.5-4" stroke="#0a3a1a" stroke-width="1.4" fill="none"/></svg><svg style="position:absolute;left:453.2px;top:284.8px" width="10" height="10" viewBox="0 0 10 10"><rect x="0.5" y="0.5" width="9" height="9" rx="1" fill="#1a9a58" stroke="#0a6a38" stroke-width="0.8"/><path d="M2.3 5l2 2l3.5-4" stroke="#0a3a1a" stroke-width="1.4" fill="none"/></svg><svg style="position:absolute;left:539.8px;top:269.8px" width="10" height="10" viewBox="0 0 10 10"><rect x="0.5" y="0.5" width="9" height="9" rx="1" fill="#1a9a58" stroke="#0a6a38" stroke-width="0.8"/><path d="M2.3 5l2 2l3.5-4" stroke="#0a3a1a" stroke-width="1.4" fill="none"/></svg><svg style="position:absolute;left:416px;top:262px" width="9" height="14" viewBox="0 0 9 14"><path d="M0.5 0.5v11l2.8-2.6l2 4.2l1.6-0.8l-2-4.1h3.8z" fill="#fff" stroke="#222" stroke-width="0.9"/></svg><div style="position:absolute;left:755px;top:234px;width:1px;height:158px;background:#cfc9b2;"></div><div style="position:absolute;left:756px;top:234px;width:12px;height:158px;background:#f7f4ea;"></div><div style="position:absolute;left:756px;top:234px;width:12px;height:16px;background:linear-gradient(#f9f6ea,#efe9d4);"></div><div style="position:absolute;left:756px;top:249px;width:12px;height:1px;background:#d2cbb2;"></div><svg style="position:absolute;left:759px;top:238px" width="6" height="6" viewBox="0 0 6 6"><path d="M3 0l3 6h-6z" fill="#6e6c5e"/></svg><div style="position:absolute;left:756px;top:376px;width:12px;height:1px;background:#d2cbb2;"></div><div style="position:absolute;left:756px;top:377px;width:12px;height:15px;background:linear-gradient(#f9f6ea,#efe9d4);"></div><svg style="position:absolute;left:759px;top:381px" width="6" height="6" viewBox="0 0 6 6"><path d="M0 0h6l-3 6z" fill="#6e6c5e"/></svg><div style="position:absolute;left:756px;top:306px;width:12px;height:13px;background:#eeecd8;border-top:1px solid #d0ccb4;border-bottom:1px solid #d0ccb4;box-sizing:border-box;"></div><svg style="position:absolute;left:53px;top:402.5px" width="12" height="10" viewBox="0 0 12 10"><path d="M2.2 5.2a3.8 3.8 0 0 1 6.6-2.6M9.8 4.8a3.8 3.8 0 0 1-6.6 2.6" stroke="#2a6a34" stroke-width="1.5" fill="none"/><path d="M6.8 3.4l3.6 0.2l-0.4-3.4zM5.2 6.6l-3.6-0.2l0.4 3.4z" fill="#111"/></svg><div style="position:absolute;left:69px;top:400px;width:1px;height:14px;background:#d2cbb4;"></div><div style="position:absolute;left:70px;top:400px;width:1px;height:14px;background:#fbf8ee;"></div><svg style="position:absolute;left:74.5px;top:401px" width="13" height="13" viewBox="0 0 13 13"><rect x="7" y="1" width="4.5" height="10" fill="#f2d870" stroke="#c8a030" stroke-width="0.8"/><rect x="1" y="7" width="4.5" height="5.5" fill="#2a5ad0"/><rect x="2.2" y="8.2" width="2.1" height="3" fill="#e8f0ff"/><path d="M1.5 4c1-2.5 3-3 5-2" stroke="#2a8a2a" stroke-width="1.2" fill="none"/><path d="M7 12c1.5 0 3-1 3.5-2.5" stroke="#2a8a2a" stroke-width="1.2" fill="none"/></svg><div style="position:absolute;left:48px;top:420px;width:721px;height:108px;background:#fdfdfb;border:1px solid #bcb6a2;box-sizing:border-box;"></div><div style="position:absolute;left:49px;top:421px;width:706px;height:16px;background:linear-gradient(#f8f3e4,#f2e9cf 60%,#eee3c3);"></div><div style="position:absolute;left:49px;top:437px;width:706px;height:1px;background:#d8ceae;"></div><div style="position:absolute;left:755px;top:421px;width:1px;height:106px;background:#cfc9b2;"></div><div style="position:absolute;left:756px;top:421px;width:12px;height:106px;background:#f7f4ea;"></div><div style="position:absolute;left:756px;top:421px;width:12px;height:16px;background:linear-gradient(#f9f6ea,#efe9d4);"></div><div style="position:absolute;left:756px;top:436px;width:12px;height:1px;background:#d2cbb2;"></div><svg style="position:absolute;left:759px;top:425px" width="6" height="6" viewBox="0 0 6 6"><path d="M3 0l3 6h-6z" fill="#6e6c5e"/></svg><div style="position:absolute;left:756px;top:511px;width:12px;height:1px;background:#d2cbb2;"></div><div style="position:absolute;left:756px;top:512px;width:12px;height:15px;background:linear-gradient(#f9f6ea,#efe9d4);"></div><svg style="position:absolute;left:759px;top:516px" width="6" height="6" viewBox="0 0 6 6"><path d="M0 0h6l-3 6z" fill="#6e6c5e"/></svg><div style="position:absolute;left:756px;top:467px;width:12px;height:13px;background:#eeecd8;border-top:1px solid #d0ccb4;border-bottom:1px solid #d0ccb4;box-sizing:border-box;"></div>
<span id="t0" style="position:absolute;left:17.6px;top:4.31px;font-size:10.5px;line-height:1;font-weight:400;color:#c4c8ca;white-space:nowrap;-webkit-text-stroke:0.1px currentColor;transform:scaleX(0.9071);transform-origin:0 0;">Управление производственным предприятием, редакция 1.3 / Администратор УПП /</span><span id="t1" style="position:absolute;left:11.8px;top:22.41px;font-size:10.5px;line-height:1;font-weight:400;color:#3b3a32;white-space:nowrap;-webkit-text-stroke:0.25px currentColor;transform:scaleX(0.8595);transform-origin:0 0;">Файл</span><span id="t2" style="position:absolute;left:47px;top:22.41px;font-size:10.5px;line-height:1;font-weight:400;color:#3b3a32;white-space:nowrap;-webkit-text-stroke:0.25px currentColor;transform:scaleX(0.8374);transform-origin:0 0;">Правка</span><span id="t3" style="position:absolute;left:86.9px;top:22.41px;font-size:10.5px;line-height:1;font-weight:400;color:#3b3a32;white-space:nowrap;-webkit-text-stroke:0.25px currentColor;transform:scaleX(0.7959);transform-origin:0 0;">Операции</span><span id="t4" style="position:absolute;left:133.9px;top:22.41px;font-size:10.5px;line-height:1;font-weight:400;color:#3b3a32;white-space:nowrap;-webkit-text-stroke:0.25px currentColor;transform:scaleX(0.8189);transform-origin:0 0;">Справочники</span><span id="t5" style="position:absolute;left:194.4px;top:22.41px;font-size:10.5px;line-height:1;font-weight:400;color:#3b3a32;white-space:nowrap;-webkit-text-stroke:0.25px currentColor;transform:scaleX(0.8607);transform-origin:0 0;">Документы</span><span id="t6" style="position:absolute;left:248px;top:22.41px;font-size:10.5px;line-height:1;font-weight:400;color:#3b3a32;white-space:nowrap;-webkit-text-stroke:0.25px currentColor;transform:scaleX(0.8183);transform-origin:0 0;">Отчеты</span><span id="t7" style="position:absolute;left:287.4px;top:22.41px;font-size:10.5px;line-height:1;font-weight:400;color:#3b3a32;white-space:nowrap;-webkit-text-stroke:0.25px currentColor;transform:scaleX(0.8229);transform-origin:0 0;">Сервис</span><span id="t8" style="position:absolute;left:329px;top:22.41px;font-size:10.5px;line-height:1;font-weight:400;color:#3b3a32;white-space:nowrap;-webkit-text-stroke:0.25px currentColor;transform:scaleX(0.8399);transform-origin:0 0;">Окна</span><span id="t9" style="position:absolute;left:362px;top:22.41px;font-size:10.5px;line-height:1;font-weight:400;color:#3b3a32;white-space:nowrap;-webkit-text-stroke:0.25px currentColor;transform:scaleX(0.8252);transform-origin:0 0;">Справка</span><span id="t10" style="position:absolute;left:509.6px;top:43.14px;font-size:10px;line-height:1;font-weight:700;color:#6a4434;white-space:nowrap;transform:scaleX(0.9348);transform-origin:0 0;">M</span><span id="t11" style="position:absolute;left:525.7px;top:43.14px;font-size:10px;line-height:1;font-weight:700;color:#6a4434;white-space:nowrap;transform:scaleX(0.9173);transform-origin:0 0;">M+</span><span id="t12" style="position:absolute;left:544.2px;top:43.14px;font-size:10px;line-height:1;font-weight:700;color:#6a4434;white-space:nowrap;transform:scaleX(1.1138);transform-origin:0 0;">M-</span><span id="t13" style="position:absolute;left:8.6px;top:62.11px;font-size:10.5px;line-height:1;font-weight:400;color:#3b3a32;white-space:nowrap;-webkit-text-stroke:0.25px currentColor;transform:scaleX(0.8249);transform-origin:0 0;">Переключить интерфейс</span><span id="t14" style="position:absolute;left:127px;top:62.11px;font-size:10.5px;line-height:1;font-weight:400;color:#3b3a32;white-space:nowrap;-webkit-text-stroke:0.25px currentColor;transform:scaleX(0.8144);transform-origin:0 0;">Мои задачи</span><span id="t15" style="position:absolute;left:17.7px;top:81.93px;font-size:10px;line-height:1;font-weight:700;color:#555553;white-space:nowrap;transform:scaleX(0.9681);transform-origin:0 0;">Документы Конкурс</span><span id="t16" style="position:absolute;left:4px;top:99.51px;font-size:10.5px;line-height:1;font-weight:400;color:#3b3a32;white-space:nowrap;-webkit-text-stroke:0.25px currentColor;transform:scaleX(0.8475);transform-origin:0 0;">Действия</span><span id="t17" style="position:absolute;left:262.7px;top:99.51px;font-size:10.5px;line-height:1;font-weight:400;color:#3b3a32;white-space:nowrap;-webkit-text-stroke:0.25px currentColor;transform:scaleX(0.8051);transform-origin:0 0;">Перейти</span><span id="t18" style="position:absolute;left:30px;top:125.41px;font-size:10.5px;line-height:1;font-weight:400;color:#3b3a32;white-space:nowrap;-webkit-text-stroke:0.1px currentColor;transform:scaleX(0.8700);transform-origin:0 0;">Да</span><span id="t19" style="position:absolute;left:778px;top:125.41px;font-size:10.5px;line-height:1;font-weight:400;color:#3b3a32;white-space:nowrap;-webkit-text-stroke:0.1px currentColor;transform:scaleX(0.8700);transform-origin:0 0;">с</span><span id="t20" style="position:absolute;left:864.3px;top:125.41px;font-size:10.5px;line-height:1;font-weight:400;color:#3b3a32;white-space:nowrap;-webkit-text-stroke:0.1px currentColor;transform:scaleX(0.8397);transform-origin:0 0;">Срок поставки С</span><span id="t21" style="position:absolute;left:941px;top:125.41px;font-size:10.5px;line-height:1;font-weight:400;color:#3b3a32;white-space:nowrap;-webkit-text-stroke:0.1px currentColor;transform:scaleX(0.8313);transform-origin:0 0;">Срок поставки ...</span><span id="t22" style="position:absolute;left:1017.6px;top:125.41px;font-size:10.5px;line-height:1;font-weight:400;color:#3b3a32;white-space:nowrap;-webkit-text-stroke:0.1px currentColor;transform:scaleX(0.8453);transform-origin:0 0;">Ответственный</span><span id="t23" style="position:absolute;left:1215px;top:125.41px;font-size:10.5px;line-height:1;font-weight:400;color:#3b3a32;white-space:nowrap;-webkit-text-stroke:0.1px currentColor;transform:scaleX(0.8346);transform-origin:0 0;">Комментарий</span><span id="t24" style="position:absolute;left:29.5px;top:142.11px;font-size:10.5px;line-height:1;font-weight:400;color:#2a2a2a;white-space:nowrap;-webkit-text-stroke:0.25px currentColor;transform:scaleX(0.8700);transform-origin:0 0;">27</span><span id="t25" style="position:absolute;left:778px;top:142.11px;font-size:10.5px;line-height:1;font-weight:400;color:#2a2a2a;white-space:nowrap;-webkit-text-stroke:0.25px currentColor;transform:scaleX(0.8700);transform-origin:0 0;">рс</span><span id="t26" style="position:absolute;left:29.5px;top:156.91px;font-size:10.5px;line-height:1;font-weight:400;color:#2a2a2a;white-space:nowrap;-webkit-text-stroke:0.25px currentColor;transform:scaleX(0.8700);transform-origin:0 0;">07</span><span id="t27" style="position:absolute;left:778px;top:156.91px;font-size:10.5px;line-height:1;font-weight:400;color:#2a2a2a;white-space:nowrap;-webkit-text-stroke:0.25px currentColor;transform:scaleX(0.8700);transform-origin:0 0;">рс</span><span id="t28" style="position:absolute;left:29.5px;top:171.91px;font-size:10.5px;line-height:1;font-weight:400;color:#2a2a2a;white-space:nowrap;-webkit-text-stroke:0.25px currentColor;transform:scaleX(0.8700);transform-origin:0 0;">19</span><span id="t29" style="position:absolute;left:778px;top:171.91px;font-size:10.5px;line-height:1;font-weight:400;color:#2a2a2a;white-space:nowrap;-webkit-text-stroke:0.25px currentColor;transform:scaleX(0.8700);transform-origin:0 0;">рс</span><span id="t30" style="position:absolute;left:1018.2px;top:156.71px;font-size:10.5px;line-height:1;font-weight:400;color:#e6edf8;white-space:nowrap;-webkit-text-stroke:0.1px currentColor;transform:scaleX(0.8446);transform-origin:0 0;">Иванов И.И. (Директор)</span><span id="t31" style="position:absolute;left:59.2px;top:124.13px;font-size:10px;line-height:1;font-weight:700;color:#2e2e2c;white-space:nowrap;transform:scaleX(0.9492);transform-origin:0 0;">Настройки обменов данными</span><span id="t32" style="position:absolute;left:57.8px;top:164.01px;font-size:10.5px;line-height:1;font-weight:400;color:#2e2e2a;white-space:nowrap;-webkit-text-stroke:0.25px currentColor;transform:scaleX(0.8309);transform-origin:0 0;">Обмен данными с</span><span id="t33" style="position:absolute;left:74.6px;top:173.91px;font-size:10.5px;line-height:1;font-weight:400;color:#2e2e2a;white-space:nowrap;-webkit-text-stroke:0.25px currentColor;transform:scaleX(0.8448);transform-origin:0 0;">1С:УПП 8</span><span id="t34" style="position:absolute;left:161.7px;top:164.01px;font-size:10.5px;line-height:1;font-weight:400;color:#2e2e2a;white-space:nowrap;-webkit-text-stroke:0.25px currentColor;transform:scaleX(0.8321);transform-origin:0 0;">Обмен данными с</span><span id="t35" style="position:absolute;left:167px;top:173.91px;font-size:10.5px;line-height:1;font-weight:400;color:#2e2e2a;white-space:nowrap;-webkit-text-stroke:0.25px currentColor;transform:scaleX(0.8362);transform-origin:0 0;">1С:Торговлей 8</span><span id="t36" style="position:absolute;left:269px;top:164.01px;font-size:10.5px;line-height:1;font-weight:400;color:#2e2e2a;white-space:nowrap;-webkit-text-stroke:0.25px currentColor;transform:scaleX(0.8258);transform-origin:0 0;">Обмен данными</span><span id="t37" style="position:absolute;left:268px;top:173.91px;font-size:10.5px;line-height:1;font-weight:400;color:#2e2e2a;white-space:nowrap;-webkit-text-stroke:0.25px currentColor;transform:scaleX(0.8353);transform-origin:0 0;">с 1С:Розницей 8</span><span id="t38" style="position:absolute;left:373px;top:164.01px;font-size:10.5px;line-height:1;font-weight:400;color:#2e2e2a;white-space:nowrap;-webkit-text-stroke:0.25px currentColor;transform:scaleX(0.8258);transform-origin:0 0;">Обмен данными</span><span id="t39" style="position:absolute;left:377px;top:173.91px;font-size:10.5px;line-height:1;font-weight:400;color:#2e2e2a;white-space:nowrap;-webkit-text-stroke:0.25px currentColor;transform:scaleX(0.8393);transform-origin:0 0;">с WEB-сайтом</span><span id="t40" style="position:absolute;left:475.3px;top:164.01px;font-size:10.5px;line-height:1;font-weight:400;color:#2e2e2a;white-space:nowrap;-webkit-text-stroke:0.25px currentColor;transform:scaleX(0.8328);transform-origin:0 0;">Распределенные</span><span id="t41" style="position:absolute;left:463px;top:173.91px;font-size:10.5px;line-height:1;font-weight:400;color:#2e2e2a;white-space:nowrap;-webkit-text-stroke:0.25px currentColor;transform:scaleX(0.8296);transform-origin:0 0;">информационные базы</span><span id="t42" style="position:absolute;left:589.5px;top:169.01px;font-size:10.5px;line-height:1;font-weight:400;color:#2e2e2a;white-space:nowrap;-webkit-text-stroke:0.25px currentColor;transform:scaleX(0.8349);transform-origin:0 0;">Все обмены</span><span id="t43" style="position:absolute;left:49.4px;top:196.29px;font-size:11px;line-height:1;font-weight:700;color:#4660a6;white-space:nowrap;transform:scaleX(1.0771);transform-origin:0 0;">Настройки всех обменов (кроме обменов с WEB-сайтом)</span><span id="t44" style="position:absolute;left:51.8px;top:218.21px;font-size:10.5px;line-height:1;font-weight:400;color:#3b3a32;white-space:nowrap;-webkit-text-stroke:0.25px currentColor;transform:scaleX(0.8519);transform-origin:0 0;">Действия</span><span id="t45" style="position:absolute;left:122.5px;top:218.21px;font-size:10.5px;line-height:1;font-weight:400;color:#3b3a32;white-space:nowrap;-webkit-text-stroke:0.25px currentColor;transform:scaleX(0.8469);transform-origin:0 0;">Добавить</span><span id="t46" style="position:absolute;left:72.2px;top:236.51px;font-size:10.5px;line-height:1;font-weight:400;color:#3b3a32;white-space:nowrap;-webkit-text-stroke:0.25px currentColor;transform:scaleX(0.8700);transform-origin:0 0;">Код</span><span id="t47" style="position:absolute;left:110.8px;top:236.51px;font-size:10.5px;line-height:1;font-weight:400;color:#3b3a32;white-space:nowrap;-webkit-text-stroke:0.25px currentColor;transform:scaleX(0.8160);transform-origin:0 0;">Наименование</span><span id="t48" style="position:absolute;left:253px;top:236.51px;font-size:10.5px;line-height:1;font-weight:400;color:#3b3a32;white-space:nowrap;-webkit-text-stroke:0.25px currentColor;transform:scaleX(0.8700);transform-origin:0 0;">Узел</span><span id="t49" style="position:absolute;left:364px;top:236.51px;font-size:10.5px;line-height:1;font-weight:400;color:#3b3a32;white-space:nowrap;-webkit-text-stroke:0.25px currentColor;transform:scaleX(0.8700);transform-origin:0 0;">Загрузка</span><span id="t50" style="position:absolute;left:364px;top:253.51px;font-size:10.5px;line-height:1;font-weight:400;color:#3b3a32;white-space:nowrap;-webkit-text-stroke:0.25px currentColor;transform:scaleX(0.8223);transform-origin:0 0;">Отложенные дви...</span><span id="t51" style="position:absolute;left:451.9px;top:253.51px;font-size:10.5px;line-height:1;font-weight:400;color:#3b3a32;white-space:nowrap;-webkit-text-stroke:0.25px currentColor;transform:scaleX(0.8078);transform-origin:0 0;">Наличие фоновой...</span><span id="t52" style="position:absolute;left:538.6px;top:236.51px;font-size:10.5px;line-height:1;font-weight:400;color:#3b3a32;white-space:nowrap;-webkit-text-stroke:0.25px currentColor;transform:scaleX(0.8700);transform-origin:0 0;">Выгрузка</span><span id="t53" style="position:absolute;left:619.8px;top:236.51px;font-size:10.5px;line-height:1;font-weight:400;color:#3b3a32;white-space:nowrap;-webkit-text-stroke:0.25px currentColor;transform:scaleX(0.8700);transform-origin:0 0;">Комментарий</span><span id="t54" style="position:absolute;left:71.7px;top:270.01px;font-size:10.5px;line-height:1;font-weight:400;color:#2a2a2a;white-space:nowrap;-webkit-text-stroke:0.25px currentColor;transform:scaleX(0.7929);transform-origin:0 0;">001</span><span id="t55" style="position:absolute;left:110px;top:270.01px;font-size:10.5px;line-height:1;font-weight:400;color:#f4f6fc;white-space:nowrap;-webkit-text-stroke:0.1px currentColor;transform:scaleX(0.8381);transform-origin:0 0;">Обмен данными УТО &lt;=&gt; УПП</span><span id="t56" style="position:absolute;left:253px;top:270.01px;font-size:10.5px;line-height:1;font-weight:400;color:#2a2a2a;white-space:nowrap;-webkit-text-stroke:0.25px currentColor;transform:scaleX(0.8369);transform-origin:0 0;">База приемник</span><span id="t57" style="position:absolute;left:380px;top:270.01px;font-size:10.5px;line-height:1;font-weight:400;color:#2a2a2a;white-space:nowrap;-webkit-text-stroke:0.25px currentColor;transform:scaleX(0.8147);transform-origin:0 0;">19.03.2019 20:08</span><span id="t58" style="position:absolute;left:380px;top:284.91px;font-size:10.5px;line-height:1;font-weight:400;color:#2a2a2a;white-space:nowrap;-webkit-text-stroke:0.25px currentColor;transform:scaleX(0.8315);transform-origin:0 0;">Успешно</span><span id="t59" style="position:absolute;left:468px;top:284.91px;font-size:10.5px;line-height:1;font-weight:400;color:#2a2a2a;white-space:nowrap;-webkit-text-stroke:0.25px currentColor;transform:scaleX(0.8075);transform-origin:0 0;">Завершена</span><span id="t60" style="position:absolute;left:554.6px;top:269.51px;font-size:10.5px;line-height:1;font-weight:400;color:#2a2a2a;white-space:nowrap;-webkit-text-stroke:0.25px currentColor;transform:scaleX(0.8067);transform-origin:0 0;">19.03.2019</span><span id="t61" style="position:absolute;left:554.6px;top:280.41px;font-size:10.5px;line-height:1;font-weight:400;color:#2a2a2a;white-space:nowrap;-webkit-text-stroke:0.25px currentColor;transform:scaleX(0.8700);transform-origin:0 0;">20:08</span><span id="t62" style="position:absolute;left:53px;top:423.51px;font-size:10.5px;line-height:1;font-weight:400;color:#3b3a32;white-space:nowrap;-webkit-text-stroke:0.25px currentColor;transform:scaleX(0.8323);transform-origin:0 0;">Настройки выполнения обмена</span>
</body></html>
